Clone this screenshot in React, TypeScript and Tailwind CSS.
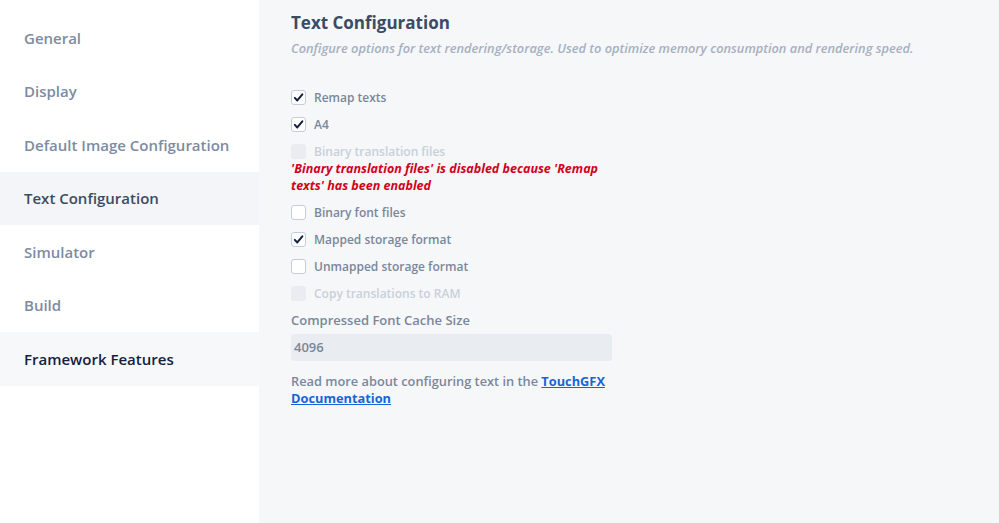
import React from "react";

const navItems = [
  { label: "General", state: "normal" },
  { label: "Display", state: "normal" },
  { label: "Default Image Configuration", state: "normal" },
  { label: "Text Configuration", state: "selected" },
  { label: "Simulator", state: "normal" },
  { label: "Build", state: "normal" },
  { label: "Framework Features", state: "hover" },
];

function Check({ checked, disabled }: { checked?: boolean; disabled?: boolean }) {
  if (disabled) {
    return <span className="w-[15px] h-[15px] rounded-[3px] bg-[#e9ecf0] shrink-0" />;
  }
  return (
    <span className="w-[15px] h-[15px] rounded-[3px] border border-[#c5ccd6] bg-white shrink-0 flex items-center justify-center">
      {checked && (
        <svg width="11" height="11" viewBox="0 0 12 12">
          <path d="M2 6.4 L4.7 9.2 L10.2 2.6" fill="none" stroke="#14213d" strokeWidth="2.2" strokeLinecap="round" strokeLinejoin="round" />
        </svg>
      )}
    </span>
  );
}

function Row({ label, checked, disabled }: { label: string; checked?: boolean; disabled?: boolean }) {
  return (
    <div className="h-[27px] flex items-center gap-[8px]">
      <Check checked={checked} disabled={disabled} />
      <span className={`text-[12px] font-semibold ${disabled ? "text-[#c9d0da]" : "text-[#7a879b]"}`}>{label}</span>
    </div>
  );
}

export default function App() {
  return (
    <div
      className="w-[999px] h-[523px] flex bg-[#f6f7f9] overflow-hidden"
      style={{ fontFamily: '"Open Sans", "Noto Sans", sans-serif' }}
    >
      <aside className="w-[259px] h-full bg-white pt-[11px] shrink-0">
        {navItems.map((n) => (
          <div
            key={n.label}
            className={`h-[53.5px] flex items-center pl-[24px] text-[15px] font-semibold ${
              n.state === "selected"
                ? "bg-[#f4f5f8] text-[#3a4b63]"
                : n.state === "hover"
                ? "bg-[#f7f8fa] text-[#14213d]"
                : "text-[#7d8ba2]"
            }`}
          >
            {n.label}
          </div>
        ))}
      </aside>
      <main className="flex-1 pl-[32px] pt-[11px]">
        <h1 className="text-[17px] font-bold text-[#3a4b63] leading-[23px]">Text Configuration</h1>
        <p className="text-[12.8px] italic font-semibold text-[#a6b0bf] leading-[20px] mt-[4px]">
          Configure options for text rendering/storage. Used to optimize memory consumption and rendering speed.
        </p>
        <div className="mt-[26px]">
          <Row label="Remap texts" checked />
          <Row label="A4" checked />
          <Row label="Binary translation files" disabled />
          <p className="w-[320px] -mt-[5px] mb-[5px] text-[12.5px] italic font-bold text-[#d0021b] leading-[17px]">
            'Binary translation files' is disabled because 'Remap texts' has been enabled
          </p>
          <Row label="Binary font files" />
          <Row label="Mapped storage format" checked />
          <Row label="Unmapped storage format" />
          <Row label="Copy translations to RAM" disabled />
        </div>
        <div className="mt-[4px] text-[13px] font-semibold text-[#7a879b] leading-[18px]">Compressed Font Cache Size</div>
        <div className="mt-[5px] w-[321px] h-[27px] rounded-[3px] bg-[#e9ecf0] flex items-center pl-[3px] text-[13px] text-[#7a879b] font-semibold">
          4096
        </div>
        <p className="mt-[12px] w-[325px] text-[12.8px] font-semibold text-[#7a879b] leading-[17px]">
          Read more about configuring text in the{" "}
          <a href="#" className="text-[#1565d8] font-bold underline">
            TouchGFX Documentation
          </a>
        </p>
      </main>
    </div>
  );
}
